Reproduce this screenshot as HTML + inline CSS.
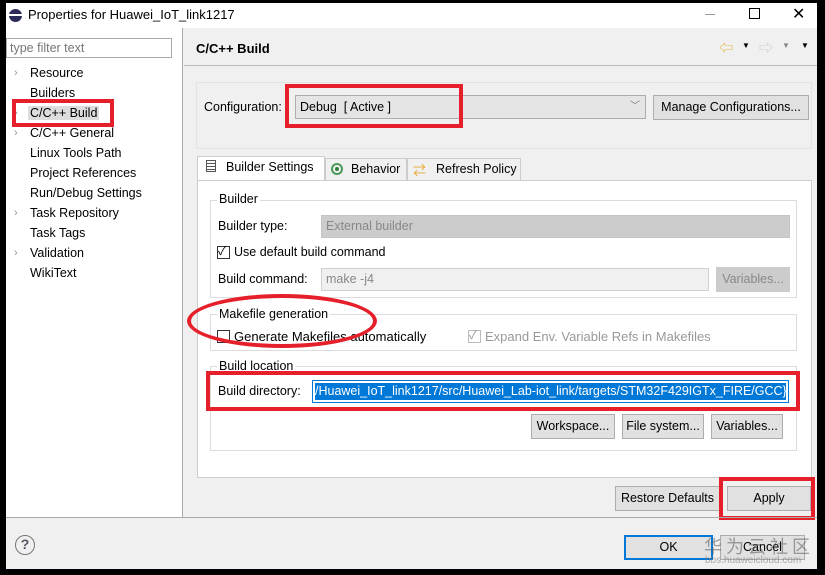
<!DOCTYPE html>
<html><head><meta charset="utf-8"><style>
*{box-sizing:border-box;margin:0;padding:0}
body{width:825px;height:575px;background:#000;position:relative;overflow:hidden;font-family:"Liberation Sans","Noto Sans CJK SC",sans-serif;font-size:12.5px;color:#000}
.a{position:absolute;white-space:nowrap}
.btn{position:absolute;background:#e1e1e1;border:1px solid #adadad;text-align:center;line-height:22px;font-size:12.5px}
.grp{position:absolute;border:1px solid #dcdcdc}
.lg{position:absolute;background:#fff;padding:0 2px;font-size:12.5px}
.red{position:absolute;border:4px solid #e5202a}
.cb{position:absolute;width:13px;height:13px;border:1px solid #333;background:#fff}
.dis{color:#999}
</style></head><body>
<div class="a" style="left:6px;top:3px;width:811px;height:566px;background:#f0f0f0"></div>
<div class="a" style="left:6px;top:3px;width:811px;height:25px;background:#fff"></div>
<div class="a" style="left:9px;top:9px;width:13px;height:13px;border-radius:50%;background:#2c2a5a"></div>
<div class="a" style="left:9px;top:14px;width:13px;height:2px;background:#fff"></div>
<div class="a" style="left:28px;top:7px;font-size:13px">Properties for Huawei_IoT_link1217</div>
<div class="a" style="left:705px;top:14px;width:10px;height:1px;background:#999"></div>
<div class="a" style="left:749px;top:8px;width:11px;height:11px;border:1px solid #000"></div>
<div class="a" style="left:792px;top:4px;font-size:16px">✕</div>
<div class="a" style="left:6px;top:28px;width:177px;height:490px;background:#fff;border-right:1px solid #aaa"></div>
<div class="a" style="left:6px;top:38px;width:166px;height:20px;border:1px solid #aaa;background:#fff;color:#777;padding-left:3px;line-height:18px">type filter text</div>
<div class="a" style="left:30px;top:63px;line-height:20px;font-size:12.5px">Resource<br>Builders<br><span style="background:#ddd;padding:0 2px;margin-left:-2px">C/C++ Build</span><br>C/C++ General<br>Linux Tools Path<br>Project References<br>Run/Debug Settings<br>Task Repository<br>Task Tags<br>Validation<br>WikiText</div>
<div class="a" style="left:14px;top:63px;line-height:20px;color:#999;font-size:11px">›<br><br>›<br>›<br><br><br><br>›<br><br>›</div>
<div class="red" style="left:12px;top:99px;width:102px;height:28px"></div>
<div class="a" style="left:184px;top:28px;width:633px;height:38px;background:#f0f0f0;border-bottom:1px solid #bbb"></div>
<div class="a" style="left:196px;top:41px;font-weight:bold;font-size:13px">C/C++ Build</div>
<div class="a" style="left:719px;top:38px;color:#e6b23a;font-size:14px">⇦</div>
<div class="a" style="left:742px;top:41px;font-size:8px">▼</div>
<div class="a" style="left:759px;top:38px;color:#ccc;font-size:14px">⇨</div>
<div class="a" style="left:782px;top:41px;font-size:8px;color:#888">▼</div>
<div class="a" style="left:801px;top:41px;font-size:8px">▼</div>
<div class="a" style="left:196px;top:82px;width:616px;height:67px;border:1px solid #e3e3e3"></div>
<div class="a" style="left:204px;top:100px">Configuration:</div>
<div class="a" style="left:295px;top:95px;width:351px;height:24px;border:1px solid #adadad;background:#e5e5e5;padding-left:4px;line-height:22px">Debug&nbsp;&nbsp;[ Active ]<span style="position:absolute;right:5px;color:#777;font-size:10px">﹀</span></div>
<div class="red" style="left:285px;top:84px;width:178px;height:44px"></div>
<div class="btn" style="left:653px;top:95px;width:156px;height:25px">Manage Configurations...</div>
<div class="a" style="left:197px;top:156px;width:128px;height:25px;background:#fff;border:1px solid #ccc;border-bottom:none"></div>
<div class="a" style="left:206px;top:160px;width:10px;height:12px;border:1px solid #555;background:repeating-linear-gradient(#fff 0 2px,#555 2px 3px)"></div>
<div class="a" style="left:226px;top:160px">Builder Settings</div>
<div class="a" style="left:325px;top:158px;width:82px;height:23px;border:1px solid #ccc;background:#f0f0f0"></div>
<div class="a" style="left:331px;top:163px;width:12px;height:12px;border-radius:50%;border:2px solid #4c9a5a"></div>
<div class="a" style="left:335px;top:167px;width:4px;height:4px;border-radius:50%;background:#2f7d3b"></div>
<div class="a" style="left:351px;top:162px">Behavior</div>
<div class="a" style="left:407px;top:158px;width:114px;height:23px;border:1px solid #ccc;background:#f0f0f0"></div>
<div class="a" style="left:413px;top:160px;color:#e6a930;font-size:13px">⇄</div>
<div class="a" style="left:436px;top:162px">Refresh Policy</div>
<div class="a" style="left:197px;top:180px;width:615px;height:298px;background:#fff;border:1px solid #ccc"></div>
<div class="grp" style="left:210px;top:200px;width:587px;height:98px"></div>
<div class="lg" style="left:217px;top:192px">Builder</div>
<div class="a" style="left:218px;top:219px">Builder type:</div>
<div class="a" style="left:321px;top:215px;width:469px;height:23px;background:#ccc;border:1px solid #c4c4c4;color:#888;padding-left:4px;line-height:21px">External builder</div>
<div class="cb" style="left:217px;top:246px"></div><div class="a" style="left:218px;top:242px;font-size:12px">✓</div>
<div class="a" style="left:234px;top:245px">Use default build command</div>
<div class="a" style="left:218px;top:272px">Build command:</div>
<div class="a" style="left:321px;top:268px;width:388px;height:23px;background:#f0f0f0;border:1px solid #d0d0d0;color:#888;padding-left:4px;line-height:21px">make -j4</div>
<div class="btn" style="left:716px;top:267px;width:74px;height:25px;background:#ccc;border-color:#ccc;color:#888">Variables...</div>
<div class="grp" style="left:210px;top:314px;width:587px;height:37px"></div>
<div class="lg" style="left:217px;top:307px">Makefile generation</div>
<div class="cb" style="left:217px;top:330px;border-color:#333"></div>
<div class="a" style="left:234px;top:329px;font-size:13px">Generate Makefiles automatically</div>
<div class="cb" style="left:468px;top:330px;border-color:#bbb"></div><div class="a dis" style="left:469px;top:326px;font-size:12px">✓</div>
<div class="a dis" style="left:485px;top:329px;font-size:13px">Expand Env. Variable Refs in Makefiles</div>
<div class="a" style="left:187px;top:294px;width:190px;height:54px;border:4px solid #e5202a;border-radius:50%"></div>
<div class="grp" style="left:210px;top:366px;width:587px;height:85px"></div>
<div class="lg" style="left:217px;top:359px">Build location</div>
<div class="a" style="left:218px;top:384px">Build directory:</div>
<div class="a" style="left:312px;top:380px;width:477px;height:23px;border:1px solid #0078d7;padding:2px"><div style="background:#0078d7;color:#fff;height:17px;line-height:17px;white-space:nowrap;overflow:hidden">/Huawei_IoT_link1217/src/Huawei_Lab-iot_link/targets/STM32F429IGTx_FIRE/GCC}</div></div>
<div class="red" style="left:206px;top:371px;width:594px;height:40px"></div>
<div class="btn" style="left:531px;top:414px;width:84px;height:25px">Workspace...</div>
<div class="btn" style="left:622px;top:414px;width:82px;height:25px">File system...</div>
<div class="btn" style="left:711px;top:414px;width:72px;height:25px">Variables...</div>
<div class="btn" style="left:615px;top:486px;width:105px;height:25px">Restore Defaults</div>
<div class="btn" style="left:727px;top:486px;width:84px;height:25px">Apply</div>
<div class="red" style="left:719px;top:477px;width:96px;height:43px"></div>
<div class="a" style="left:6px;top:517px;width:811px;height:1px;background:#aaa"></div>
<div class="a" style="left:15px;top:535px;width:20px;height:20px;border-radius:50%;border:1.5px solid #777;text-align:center;line-height:17px;font-weight:bold;color:#556;font-size:14px">?</div>
<div class="btn" style="left:624px;top:535px;width:89px;height:25px;border:2px solid #0078d7;line-height:21px">OK</div>
<div class="btn" style="left:720px;top:535px;width:85px;height:25px">Cancel</div>
<div class="a" style="left:704px;top:533px;color:rgba(90,90,90,.55);font-size:18px;letter-spacing:4px">华为云社区</div>
<div class="a" style="left:705px;top:555px;color:rgba(120,120,120,.6);font-size:10px">bbs.huaweicloud.com</div>
</body></html>
